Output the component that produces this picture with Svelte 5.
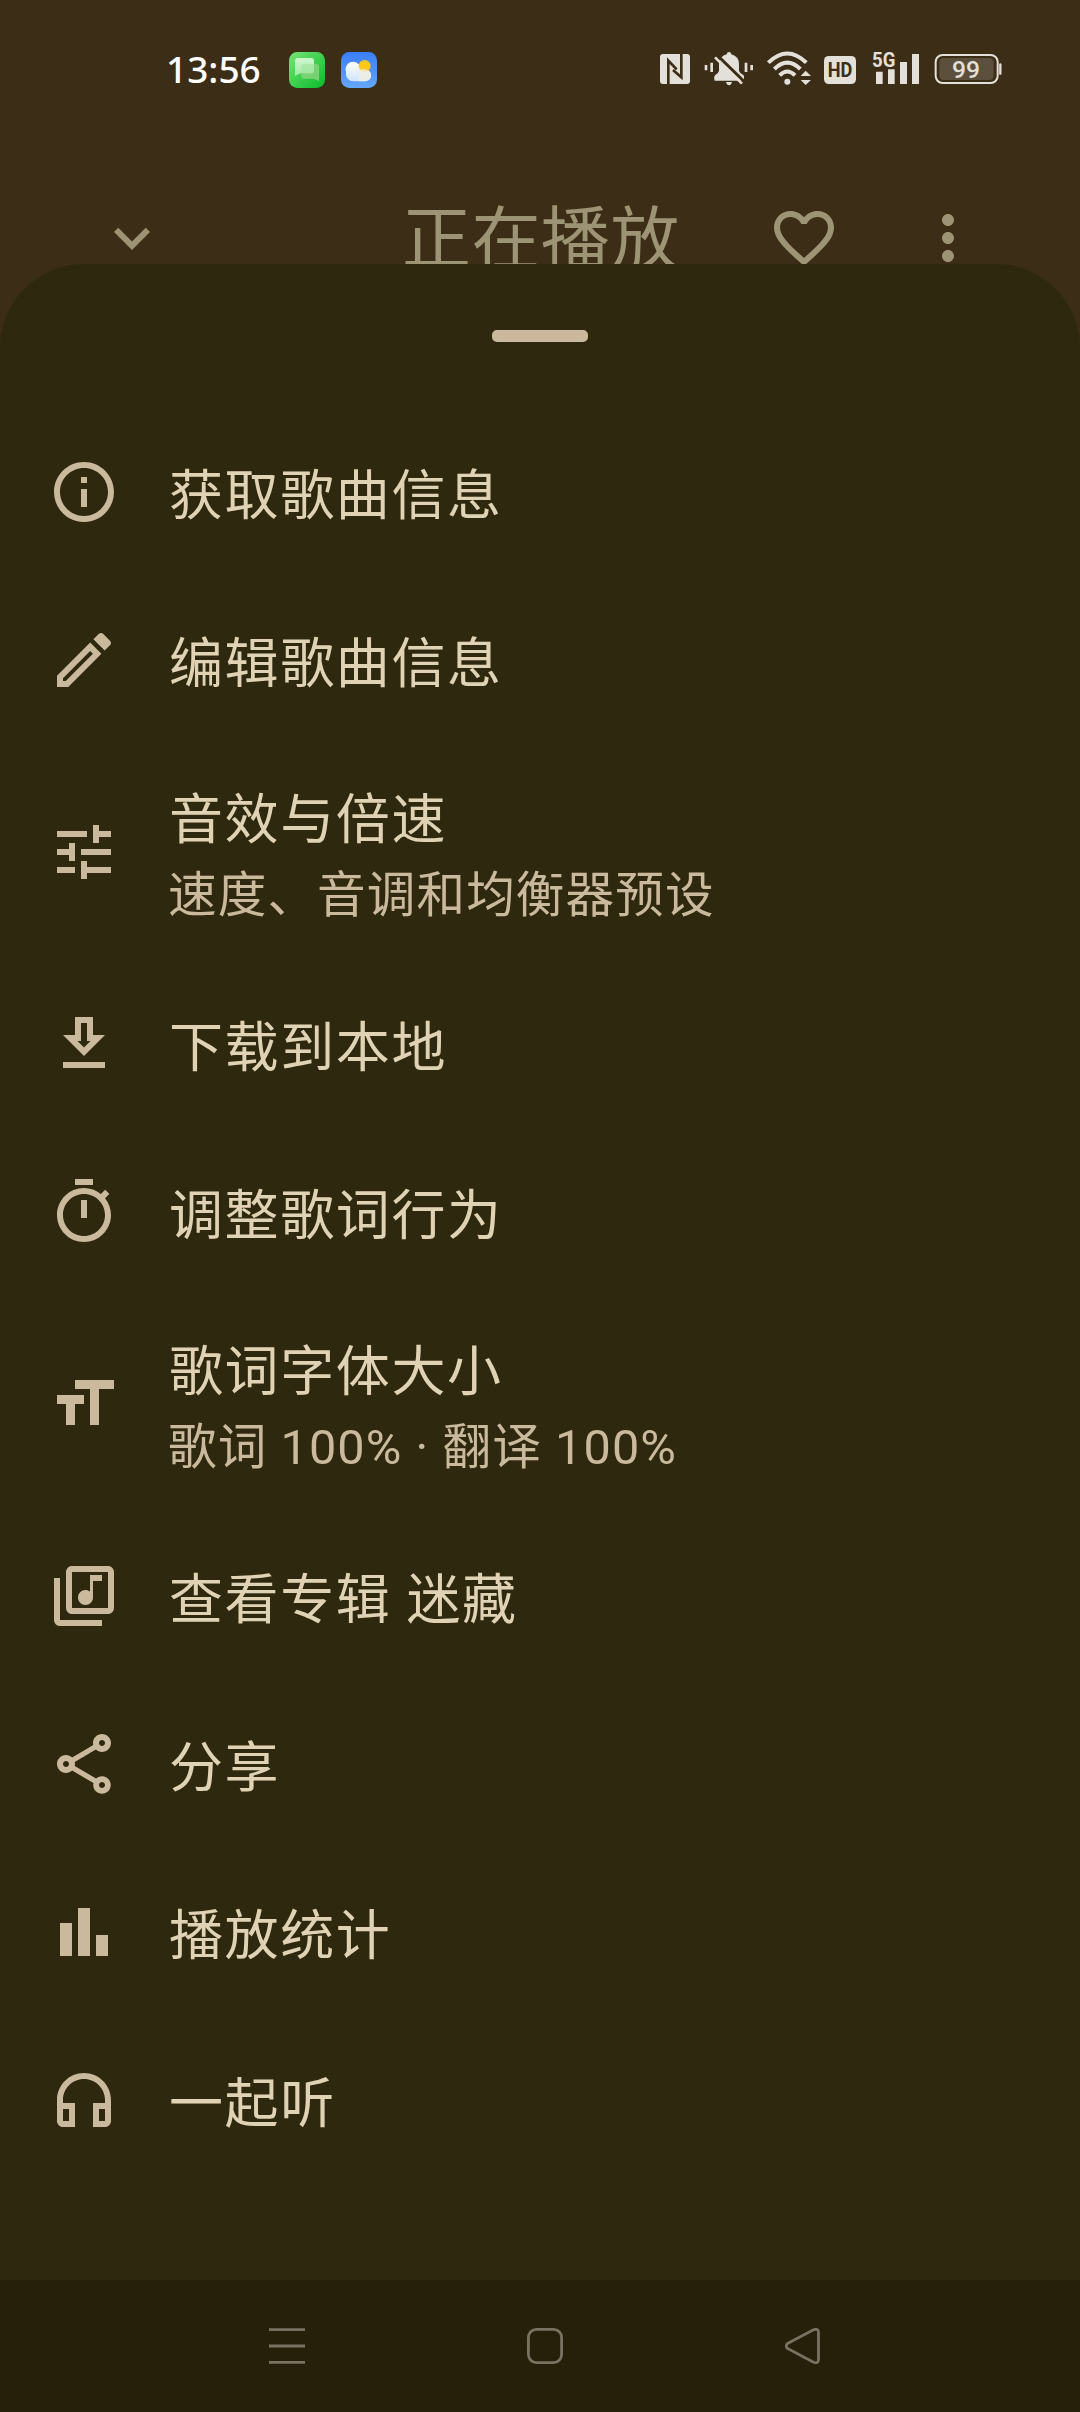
<script lang="ts">
  interface MenuItem {
    title: string;
    sub?: string;
    icon: string;
  }

  // Icon paths on a 24x24 grid
  const icons: Record<string, string> = {
    info: "M11 7h2v2h-2zm0 4h2v6h-2zm1-9C6.48 2 2 6.48 2 12s4.48 10 10 10 10-4.48 10-10S17.52 2 12 2zm0 18c-4.41 0-8-3.59-8-8s3.59-8 8-8 8 3.59 8 8-3.59 8-8 8z",
    edit: "M14.06 9.02l.92.92L5.92 19H5v-.92l9.06-9.06M17.66 3c-.25 0-.51.1-.7.29l-1.83 1.83 3.75 3.75 1.83-1.83c.39-.39.39-1.02 0-1.41l-2.34-2.34c-.2-.2-.45-.29-.71-.29zm-3.6 3.19L3 17.25V21h3.75L17.81 9.94l-3.75-3.75z",
    tune: "M3 17v2h6v-2H3zM3 5v2h10V5H3zm10 16v-2h8v-2h-8v-2h-2v6h2zM7 9v2H3v2h4v2h2V9H7zm14 4v-2H11v2h10zm-6-4h2V7h4V5h-4V3h-2v6z",
    download: "M19 9h-4V3H9v6H5l7 7 7-7zm-8 2V5h2v6h1.17L12 13.17 9.83 11H11zm-6 7h14v2H5z",
    timer: "M15 1H9v2h6V1zm-4 13h2V8h-2v6zm8.03-6.61l1.42-1.42c-.43-.51-.9-.99-1.41-1.41l-1.42 1.42C16.07 4.74 14.12 4 12 4c-4.97 0-9 4.03-9 9s4.02 9 9 9 9-4.03 9-9c0-2.12-.74-4.07-1.97-5.61zM12 20c-3.87 0-7-3.13-7-7s3.13-7 7-7 7 3.13 7 7-3.13 7-7 7z",
    size: "M9 4v3h5v12h3V7h5V4H9zm-6 8h3v7h3v-7h3V9H3v3z",
    album: "M20 2H8c-1.1 0-2 .9-2 2v12c0 1.1.9 2 2 2h12c1.1 0 2-.9 2-2V4c0-1.1-.9-2-2-2zm0 14H8V4h12v12zm-7.5-1c1.38 0 2.5-1.12 2.5-2.5V7h3V5h-4v5.51c-.42-.32-.93-.51-1.5-.51-1.38 0-2.5 1.12-2.5 2.5s1.12 2.5 2.5 2.5zM4 6H2v14c0 1.1.9 2 2 2h14v-2H4V6z",
    share: "M18 16.08c-.76 0-1.44.3-1.96.77L8.91 12.7c.05-.23.09-.46.09-.7s-.04-.47-.09-.7l7.05-4.11c.54.5 1.25.81 2.04.81 1.66 0 3-1.34 3-3s-1.34-3-3-3-3 1.34-3 3c0 .24.04.47.09.7L8.04 9.81C7.5 9.31 6.79 9 6 9c-1.66 0-3 1.34-3 3s1.34 3 3 3c.79 0 1.5-.31 2.04-.81l7.12 4.16c-.05.21-.08.43-.08.65 0 1.61 1.31 2.92 2.92 2.92s2.92-1.31 2.92-2.92-1.31-2.92-2.92-2.92zM18 4c.55 0 1 .45 1 1s-.45 1-1 1-1-.45-1-1 .45-1 1-1zM6 13c-.55 0-1-.45-1-1s.45-1 1-1 1 .45 1 1-.45 1-1 1zm12 7.02c-.55 0-1-.45-1-1s.45-1 1-1 1 .45 1 1-.45 1-1 1z",
    stats: "M4 9h4v11H4zM16 13h4v7h-4zM10 4h4v16h-4z",
    headphones: "M12 3c-4.97 0-9 4.03-9 9v7c0 1.1.9 2 2 2h4v-8H5v-1c0-3.87 3.13-7 7-7s7 3.13 7 7v1h-4v8h4c1.1 0 2-.9 2-2v-7c0-4.97-4.03-9-9-9zM7 15v4H5v-4h2zm12 4h-2v-4h2v4z",
    down: "M7.41 8.59L12 13.17l4.59-4.58L18 10l-6 6-6-6z",
    heart: "M16.5 3c-1.74 0-3.41.81-4.5 2.09C10.91 3.81 9.24 3 7.5 3 4.42 3 2 5.42 2 8.5c0 3.78 3.4 6.86 8.55 11.54L12 21.35l1.45-1.32C18.6 15.36 22 12.28 22 8.5 22 5.42 19.58 3 16.5 3zm-4.4 15.55l-.1.1-.1-.1C7.14 14.24 4 11.39 4 8.5 4 6.5 5.5 5 7.5 5c1.54 0 3.04.99 3.57 2.36h1.87C13.46 5.99 14.96 5 16.5 5c2 0 3.5 1.5 3.5 3.5 0 2.89-3.14 5.74-7.9 10.05z",
    more: "M12 8c1.1 0 2-.9 2-2s-.9-2-2-2-2 .9-2 2 .9 2 2 2zm0 2c-1.1 0-2 .9-2 2s.9 2 2 2 2-.9 2-2-.9-2-2-2zm0 6c-1.1 0-2 .9-2 2s.9 2 2 2 2-.9 2-2-.9-2-2-2z",
  };

  const items: MenuItem[] = [
    { title: "获取歌曲信息", icon: "info" },
    { title: "编辑歌曲信息", icon: "edit" },
    { title: "音效与倍速", sub: "速度、音调和均衡器预设", icon: "tune" },
    { title: "下载到本地", icon: "download" },
    { title: "调整歌词行为", icon: "timer" },
    { title: "歌词字体大小", sub: "歌词 100% · 翻译 100%", icon: "size" },
    { title: "查看专辑 迷藏", icon: "album" },
    { title: "分享", icon: "share" },
    { title: "播放统计", icon: "stats" },
    { title: "一起听", icon: "headphones" },
  ];
</script>

{#snippet icon(name: string)}
  <svg class="icon" viewBox="0 0 24 24" aria-hidden="true"><path d={icons[name]} /></svg>
{/snippet}

<div class="screen" lang="zh-CN">
  <!-- Status bar -->
  <header class="status">
    <div class="status-left">
      <span class="clock">13:56</span>
      <svg class="app-icon" viewBox="0 0 108 108">
        <defs>
          <linearGradient id="chat" x1="0" y1="0" x2="1" y2="1">
            <stop offset="0" stop-color="#76e573" />
            <stop offset="1" stop-color="#08bb2c" />
          </linearGradient>
          <linearGradient id="bubble" x1="0" y1="0" x2="0" y2="1">
            <stop offset="0" stop-color="#d5f8d5" />
            <stop offset="1" stop-color="#a6eba9" />
          </linearGradient>
        </defs>
        <rect width="108" height="108" rx="25" fill="url(#chat)" />
        <path d="M44 36h38q8 0 8 8v44l-15-8H45q-8 0-8-8V44q0-8 7-8z" fill="#86d47c" opacity=".85" />
        <path d="M26 18h40q9 0 9 9v28q0 9-9 9H34L18 72V27q0-9 8-9z" fill="url(#bubble)" opacity=".95" />
        <path d="M37 44q0-8 8-8h30v19q0 9-9 9H37z" fill="#9be39a" opacity=".6" />
      </svg>
      <svg class="app-icon" viewBox="0 0 108 108">
        <defs>
          <linearGradient id="sky" x1="0" y1="0" x2="0" y2="1">
            <stop offset="0" stop-color="#3c7df8" />
            <stop offset="1" stop-color="#63a7fb" />
          </linearGradient>
          <linearGradient id="cloud" x1="0" y1="0" x2="0" y2="1">
            <stop offset="0" stop-color="#fff" />
            <stop offset="1" stop-color="#cfe3fb" />
          </linearGradient>
        </defs>
        <rect width="108" height="108" rx="25" fill="url(#sky)" />
        <path d="M38 88a23 23 0 0 1-23-27 23 23 0 0 1 43-17 22 22 0 0 1 5 8h9a18 18 0 0 1 1 36z" fill="url(#cloud)" />
        <circle cx="71" cy="42" r="18" fill="#fdc81c" />
        <path d="M54 56q8-7 17-4 18 2 19 18-1 17-18 18H54z" fill="#f0eee0" opacity=".8" />
      </svg>
    </div>

    <div class="status-right">
      <!-- NFC -->
      <svg width="38" height="37" viewBox="60 60 114 111">
        <rect x="60" y="72" width="90" height="90" rx="9" class="lit" />
        <path d="M85 162V92l25 26M124 72v70l-25-22" class="cut" stroke-width="8" />
      </svg>
      <!-- Muted bell -->
      <svg width="62" height="37" viewBox="174 60 186 111">
        <path d="M267 66q6 0 7 7 23 6 23 30v19q2 8 13 13 4 4 1 17h-87q-4-11 2-17 9-5 11-13v-22q2-21 23-27 1-7 7-7zM258 156h18q-3 10-9 10t-9-10z" class="lit" />
        <path d="M232 76l82 80" class="cut" stroke-width="9" />
        <path d="M225 82l81 79" class="line" stroke-width="8" />
        <path d="M198 105v16M215 98v28M318 98v28M335 105v16" class="line" stroke-width="8" />
      </svg>
      <!-- Wi-Fi -->
      <svg width="58" height="37" viewBox="360 60 174 111">
        <path d="M385 98q57-55 114 0" class="line" stroke-width="12" />
        <path d="M403 117q39-38 78 0" class="line" stroke-width="12" />
        <path d="M419 136q23-23 46 0" class="line" stroke-width="12" />
        <circle cx="442" cy="155" r="9" class="lit" />
        <path d="M482 138l15-16 16 16zM482 150l15 15 16-15z" class="lit" />
      </svg>
      <!-- HD -->
      <svg width="46" height="37" viewBox="534 60 138 111">
        <rect x="552" y="78" width="96" height="84" rx="14" class="lit" />
        <text x="600" y="140" text-anchor="middle" textLength="74" lengthAdjust="spacingAndGlyphs" class="hd">HD</text>
      </svg>
      <!-- 5G signal -->
      <svg width="63" height="45" viewBox="672 48 189 135">
        <text x="696" y="110" textLength="70" lengthAdjust="spacingAndGlyphs" class="five-g">5G</text>
        <path d="M708 125h20v37h-20zM744 118h20v44h-20zM780 96h21v66h-21zM816 72h21v90h-21z" class="lit" />
      </svg>
      <!-- Battery -->
      <svg width="76" height="37" viewBox="861 60 228 111">
        <rect x="887" y="75" width="186" height="84" rx="21" class="line" stroke-width="6" />
        <rect x="898" y="84" width="163" height="66" rx="13" fill="#5c4f3c" />
        <path d="M1081 103v28" class="line" stroke-width="7" stroke-linecap="round" />
        <text x="978" y="143" text-anchor="middle" textLength="84" lengthAdjust="spacingAndGlyphs" class="percent">99</text>
      </svg>
    </div>
  </header>

  <!-- Player toolbar, half hidden by the sheet -->
  <div class="toolbar">
    {@render icon("down")}
    <h1>正在播放</h1>
    {@render icon("heart")}
    {@render icon("more")}
  </div>

  <!-- Bottom sheet -->
  <main class="sheet">
    <div class="handle"></div>
    <ul>
      {#each items as item}
        <li class:tall={item.sub}>
          {@render icon(item.icon)}
          <div class="label">
            <div class="title">{item.title}</div>
            {#if item.sub}
              <div class="sub">{item.sub}</div>
            {/if}
          </div>
        </li>
      {/each}
    </ul>
  </main>

  <!-- System navigation -->
  <nav>
    <svg viewBox="0 0 36 36"><path d="M0 1.6h36M0 18h36M0 34.4h36" /></svg>
    <svg viewBox="0 0 36 36"><rect x="1.4" y="1.4" width="33.2" height="33.2" rx="8" /></svg>
    <svg viewBox="0 0 36 36"><path d="M2.5 15.6L28.5 1.8Q33.5 0 33.5 4.5v27Q33.5 36 28.5 34.2L2.5 20.4Q0 18 2.5 15.6z" /></svg>
  </nav>
</div>

<style>
  :global(body) {
    margin: 0;
    background: #3c2d16;
  }

  .screen {
    display: flex;
    flex-direction: column;
    width: 1080px;
    height: 2412px;
    overflow: hidden;
    background: #3c2d16;
    font-family: Roboto, "Noto Sans CJK SC", sans-serif;
  }

  /* ── Status bar ── */
  .status {
    display: flex;
    justify-content: space-between;
    align-items: center;
    flex: none;
    box-sizing: border-box;
    height: 140px;
    padding: 0 77px 0 166px;
  }
  .status-left,
  .status-right {
    display: flex;
    align-items: center;
  }
  .status-right {
    margin-top: -3px;
  }
  .clock {
    width: 123px;
    margin-top: -2px;
    font-family: "Noto Sans", sans-serif;
    font-size: 37px;
    font-weight: 500;
    line-height: 40px;
    color: #fff;
  }
  .app-icon {
    width: 36px;
    height: 36px;
    margin-right: 16px;
  }
  .lit {
    fill: #e3e0d9;
  }
  .line {
    fill: none;
    stroke: #e3e0d9;
  }
  .cut {
    fill: none;
    stroke: #3c2d16;
  }
  .hd {
    font-family: Roboto, sans-serif;
    font-size: 60px;
    font-weight: 700;
    fill: #3c2d16;
  }
  .five-g {
    font-family: Roboto, sans-serif;
    font-size: 60px;
    font-weight: 700;
    fill: #e3e0d9;
  }
  .percent {
    font-family: Roboto, sans-serif;
    font-size: 72px;
    font-weight: 500;
    fill: #e3e0d9;
  }

  .icon {
    flex: none;
    width: 72px;
    height: 72px;
    fill: currentColor;
  }

  /* ── Toolbar ── */
  .toolbar {
    display: flex;
    align-items: center;
    flex: none;
    height: 124px;
    padding: 0 96px;
    color: #9d9476;
  }
  .toolbar .icon {
    margin-top: 72px;
  }
  .toolbar h1 {
    flex: 1;
    margin: 77px 0 0;
    padding-left: 234px;
    font-size: 69px;
    font-weight: 400;
    line-height: 80px;
    letter-spacing: 0.4px;
    white-space: nowrap;
  }
  .toolbar .icon:last-child {
    margin-left: 72px;
  }

  /* ── Sheet ── */
  .sheet {
    flex: none;
    position: relative;
    box-sizing: border-box;
    height: 2016px;
    padding-top: 66px;
    border-radius: 84px 84px 0 0;
    background: #2e280e;
  }
  .handle {
    width: 96px;
    height: 12px;
    margin: 0 auto 66px;
    border-radius: 5px;
    background: #cab99c;
  }
  ul {
    margin: 0;
    padding: 0;
    list-style: none;
  }
  li {
    display: flex;
    align-items: center;
    gap: 48px;
    height: 168px;
    padding: 0 48px;
    color: #cab99c;
  }
  li.tall {
    height: 216px;
  }
  .label {
    padding-top: 8px;
    white-space: nowrap;
  }
  .tall .label {
    padding-top: 5px;
  }
  .title {
    padding-left: 1px;
    font-size: 54px;
    line-height: 83px;
    letter-spacing: 1.6px;
    color: #e0d2b4;
  }
  .sub {
    margin-top: -1px;
    font-size: 48.6px;
    line-height: 69px;
    letter-spacing: 1.1px;
  }

  /* ── Navigation bar ── */
  nav {
    display: flex;
    align-items: center;
    gap: 222px;
    flex: none;
    box-sizing: border-box;
    height: 132px;
    padding: 0 269px;
    background: #26200b;
  }
  nav svg {
    flex: none;
    width: 36px;
    height: 36px;
    fill: none;
    stroke: #787360;
    stroke-width: 2.8;
  }
</style>
